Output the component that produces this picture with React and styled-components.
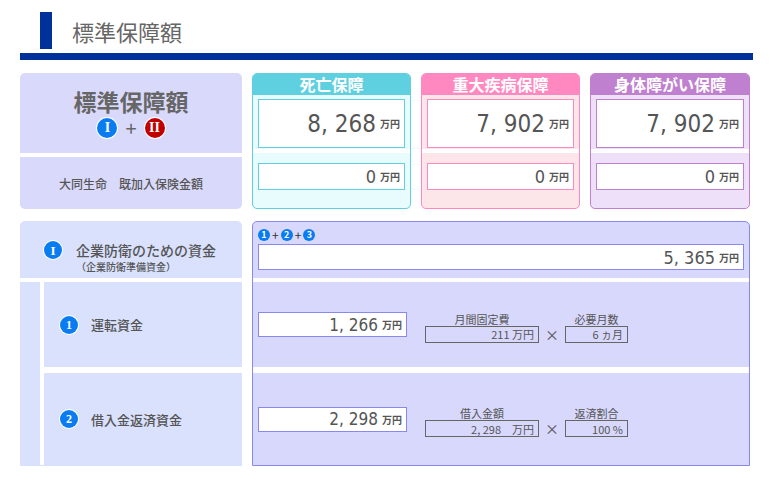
import React from "react";
import styled, { createGlobalStyle } from "styled-components";

const G = createGlobalStyle`
  body { margin:0; background:#fff; font-family:"Noto Sans CJK JP","Noto Sans",sans-serif; color:#555; }
`;
const Page = styled.div`width:770px;height:491px;overflow:hidden;padding:12px 17px 0 20px;box-sizing:border-box;`;
const Head = styled.div`display:flex;align-items:center;gap:20px;padding-left:20px;height:37px;`;
const Mark = styled.div`width:12px;height:37px;background:#00309a;`;
const Title = styled.h1`margin:0;font-size:22px;font-weight:400;color:#666;`;
const Rule = styled.div`height:7px;background:#00309a;margin-top:4px;`;
const Top = styled.div`display:grid;grid-template-columns:222px 159px 159px 160px;column-gap:10px;margin-top:13px;`;
const LeftCol = styled.div`display:flex;flex-direction:column;gap:4px;`;
const LCell = styled.div`background:#d9d9fb;border-radius:${p=>p.$r};height:${p=>p.$h}px;display:flex;flex-direction:column;align-items:center;justify-content:center;`;
const Big = styled.div`font-size:23px;font-weight:700;color:#666;line-height:28px;`;
const Plus = styled.div`display:flex;align-items:center;gap:8px;font-size:20px;color:#666;line-height:22px;margin-top:2px;`;
const Roman = styled.span`width:20px;height:20px;border-radius:50%;background:${p=>p.$c};color:#fff;font-family:"Liberation Serif",serif;font-weight:700;font-size:14px;line-height:1;display:inline-flex;align-items:center;justify-content:center;box-shadow:0 0 0 1px #fff;`;
const Small = styled.div`font-size:12px;color:#555;font-weight:500;`;
const Card = styled.div`border:1px solid ${p=>p.$c};border-radius:5px;background:${p=>p.$bg};display:flex;flex-direction:column;overflow:hidden;height:136px;box-sizing:border-box;`;
const CardHead = styled.div`background:${p=>p.$c};color:#fff;font-weight:700;font-size:16px;text-align:center;height:21px;line-height:21px;overflow:visible;flex:none;`;
const CardTop = styled.div`padding:4px 5px 6px;height:58px;box-sizing:border-box;border-bottom:4px solid #fff;`;
const CardBot = styled.div`padding:10px 5px;`;
const Box = styled.div`background:#fff;border:1px solid ${p=>p.$c};height:${p=>p.$h}px;box-sizing:border-box;display:flex;align-items:center;justify-content:flex-end;gap:4px;padding-right:4px;${p=>p.$w?`width:${p.$w}px;`:""}`;
const Num = styled.span`font-family:"DejaVu Sans Condensed","Liberation Sans",sans-serif;font-size:${p=>p.$s}px;color:#555;`;
const Unit = styled.span`font-size:10px;font-weight:700;color:#555;`;
const Sec = styled.div`display:grid;grid-template-columns:222px 498px;column-gap:10px;margin-top:12px;`;
const SecLeft = styled.div`background:#d9e1fd;border-radius:5px 5px 0 0;display:flex;flex-direction:column;`;
const Row1 = styled.div`height:61px;display:flex;align-items:flex-start;gap:14px;padding:20px 0 0 24px;box-sizing:border-box;border-bottom:4px solid #fff;`;
const Sub = styled.div`margin-left:20px;border-left:4px solid #fff;display:flex;flex-direction:column;`;
const SubRow = styled.div`height:${p=>p.$h}px;display:flex;align-items:center;gap:13px;padding-left:16px;border-bottom:${p=>p.$last?0:6}px solid #fff;box-sizing:border-box;font-size:13px;font-weight:500;color:#555;`;
const Dot = styled.span`width:18px;height:18px;border-radius:50%;background:#0a7cf2;color:#fff;font-size:${p=>p.$fs||12}px;font-weight:700;line-height:1;display:inline-flex;align-items:center;justify-content:center;box-shadow:0 0 0 1px #fff;flex:none;font-family:"Liberation Serif",serif;`;
const T1 = styled.div`font-size:14px;font-weight:500;color:#555;line-height:18px;`;
const T2 = styled.div`font-size:10px;font-weight:500;color:#555;`;
const SecRight = styled.div`border:1px solid #8888ee;border-radius:5px 5px 0 0;background:#d8d8fc;display:flex;flex-direction:column;`;
const RTop = styled.div`height:60px;padding:4px 5px 0;box-sizing:border-box;border-bottom:4px solid #fff;`;
const Sum = styled.div`display:flex;align-items:center;gap:2px;font-size:12px;color:#333;margin-bottom:1px;`;
const SmallDot = styled.span`width:12px;height:12px;border-radius:50%;background:#0a7cf2;color:#fff;font-size:9px;font-weight:700;line-height:1;display:inline-flex;align-items:center;justify-content:center;`;
const RRow = styled.div`height:${p=>p.$h}px;display:flex;align-items:center;padding-left:5px;gap:18px;border-bottom:${p=>p.$last?0:6}px solid #fff;box-sizing:border-box;`;
const Calc = styled.div`display:flex;align-items:flex-end;gap:6px;margin-top:6px;`;
const Field = styled.div`display:flex;flex-direction:column;align-items:center;`;
const FLabel = styled.div`font-size:11px;color:#555;line-height:13px;`;
const FBox = styled.div`border:1px solid #666;width:${p=>p.$w}px;height:17px;box-sizing:border-box;display:flex;justify-content:flex-end;align-items:center;padding-right:4px;font-size:11px;color:#555;gap:6px;`;
const Times = styled.div`font-size:14px;color:#555;line-height:17px;`;

const cards = [
  ["死亡保障","#5fd0e0","#e8fbfd","8, 268"],
  ["重大疾病保障","#ff88c0","#fde6ea","7, 902"],
  ["身体障がい保障","#c080d0","#efe0fa","7, 902"],
];

export default function App(){
  return <Page><G/>
    <Head><Mark/><Title>標準保障額</Title></Head>
    <Rule/>
    <Top>
      <LeftCol>
        <LCell $h={80} $r="5px 5px 0 0"><Big>標準保障額</Big><Plus><Roman $c="#0a7cf2">I</Roman>+<Roman $c="#c00000">II</Roman></Plus></LCell>
        <LCell $h={52} $r="0 0 5px 5px"><Small>大同生命　既加入保険金額</Small></LCell>
      </LeftCol>
      {cards.map(([t,c,bg,v])=>(
        <Card key={t} $c={c} $bg={bg}>
          <CardHead $c={c}>{t}</CardHead>
          <CardTop><Box $c={c} $h={49}><Num $s={24}>{v}</Num><Unit>万円</Unit></Box></CardTop>
          <CardBot><Box $c={c} $h={27}><Num $s={18}>0</Num><Unit>万円</Unit></Box></CardBot>
        </Card>))}
    </Top>
    <Sec>
      <SecLeft>
        <Row1><Dot $fs={13}>I</Dot><div><T1>企業防衛のための資金</T1><T2>（企業防衛準備資金）</T2></div></Row1>
        <Sub>
          <SubRow $h={91}><Dot>1</Dot>運転資金</SubRow>
          <SubRow $h={92} $last><Dot>2</Dot>借入金返済資金</SubRow>
        </Sub>
      </SecLeft>
      <SecRight>
        <RTop>
          <Sum><SmallDot>1</SmallDot>+<SmallDot>2</SmallDot>+<SmallDot>3</SmallDot></Sum>
          <Box $c="#8888ee" $h={26}><Num $s={18}>5, 365</Num><Unit>万円</Unit></Box>
        </RTop>
        <RRow $h={91}>
          <Box $c="#8888ee" $h={25} $w={149}><Num $s={17}>1, 266</Num><Unit>万円</Unit></Box>
          <Calc><Field><FLabel>月間固定費</FLabel><FBox $w={114}>211 万円</FBox></Field><Times>×</Times><Field><FLabel>必要月数</FLabel><FBox $w={63}>6 ヵ月</FBox></Field></Calc>
        </RRow>
        <RRow $h={92} $last>
          <Box $c="#8888ee" $h={25} $w={149}><Num $s={17}>2, 298</Num><Unit>万円</Unit></Box>
          <Calc><Field><FLabel>借入金額</FLabel><FBox $w={114}>2, 298　万円</FBox></Field><Times>×</Times><Field><FLabel>返済割合</FLabel><FBox $w={63}>100 %</FBox></Field></Calc>
        </RRow>
      </SecRight>
    </Sec>
  </Page>;
}
